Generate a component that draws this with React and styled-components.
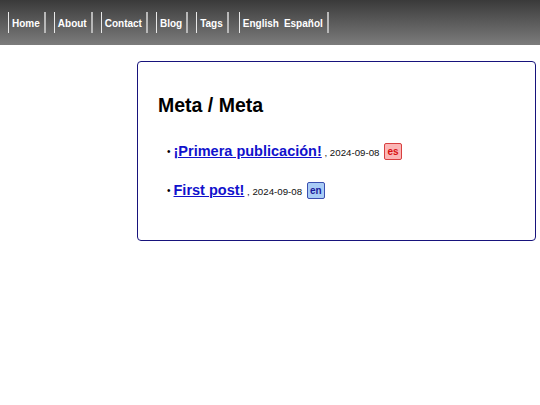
import React from 'react'
import styled, { createGlobalStyle } from 'styled-components'

const Global = createGlobalStyle`
  html, body { margin: 0; padding: 0; background: #fff; }
  body { font-family: "Liberation Sans", Arial, sans-serif; }
`

const Header = styled.header`
  height: 45px;
  background: linear-gradient(to bottom, #3a3a3a, #7c7c7c);
  display: flex;
  align-items: center;
  padding-left: 8px;
  gap: 8px;
`

const NavItem = styled.div`
  display: flex;
  align-items: center;
  gap: 5px;
  height: 21px;
  padding: 1px 4px 0 3px;
  box-sizing: border-box;
  border-left: 1px solid #e8e8e8;
  border-right: 2px solid #b8b8b8;
  margin-left: ${p => (p.$wide ? '2px' : '0')};
`

const NavLink = styled.a`
  color: #fff;
  font-size: 10px;
  font-weight: bold;
  text-decoration: none;
`

const Layout = styled.div`
  display: grid;
  grid-template-columns: 137px 1fr;
  padding: 16px 4px 0 0;
`

const Card = styled.main`
  grid-column: 2;
  border: 1.5px solid #17137c;
  border-radius: 4px;
  padding: 32px 20px 28px;
  height: 180px;
  box-sizing: border-box;
`

const Title = styled.h1`
  margin: 0 0 25px;
  font-size: 19.5px;
  font-weight: bold;
  color: #000;
`

const List = styled.ul`
  margin: 0;
  padding-left: 9px;
  list-style: none;
  display: flex;
  flex-direction: column;
  gap: 19px;
`

const Item = styled.li`
  font-size: 14.5px;
  line-height: 19px;
  color: #111;

  &::before {
    content: '•';
    color: #000;
    font-size: 10px;
    margin-right: 3px;
    vertical-align: 1px;
  }
`

const PostLink = styled.a`
  font-weight: bold;
  color: #1111cc;
  text-decoration: underline;
`

const Meta = styled.span`
  font-size: 9.7px;
`

const Badge = styled.span`
  display: inline-block;
  margin-left: 5px;
  padding: 1px 2px;
  font-size: 10px;
  font-weight: bold;
  line-height: 13px;
  border-radius: 2px;
  border: 1px solid ${p => (p.$lang === 'es' ? '#d84040' : '#3a4fb0')};
  background: ${p => (p.$lang === 'es' ? '#fbb6b6' : '#a9ccf6')};
  color: ${p => (p.$lang === 'es' ? '#d81010' : '#1a1a9a')};
  vertical-align: 1px;
`

const nav = ['Home', 'About', 'Contact', 'Blog', 'Tags']

const posts = [
  { title: '¡Primera publicación!', date: '2024-09-08', lang: 'es' },
  { title: 'First post!', date: '2024-09-08', lang: 'en' },
]

export default function App() {
  return (
    <>
      <Global />
      <Header>
        {nav.map(n => (
          <NavItem key={n}>
            <NavLink href="#">{n}</NavLink>
          </NavItem>
        ))}
        <NavItem $wide>
          <NavLink href="#">English</NavLink>
          <NavLink href="#">Español</NavLink>
        </NavItem>
      </Header>
      <Layout>
        <Card>
          <Title>Meta / Meta</Title>
          <List>
            {posts.map(p => (
              <Item key={p.title}>
                <PostLink href="#">{p.title}</PostLink>
                <Meta> , {p.date}</Meta>
                <Badge $lang={p.lang}>{p.lang}</Badge>
              </Item>
            ))}
          </List>
        </Card>
      </Layout>
    </>
  )
}
